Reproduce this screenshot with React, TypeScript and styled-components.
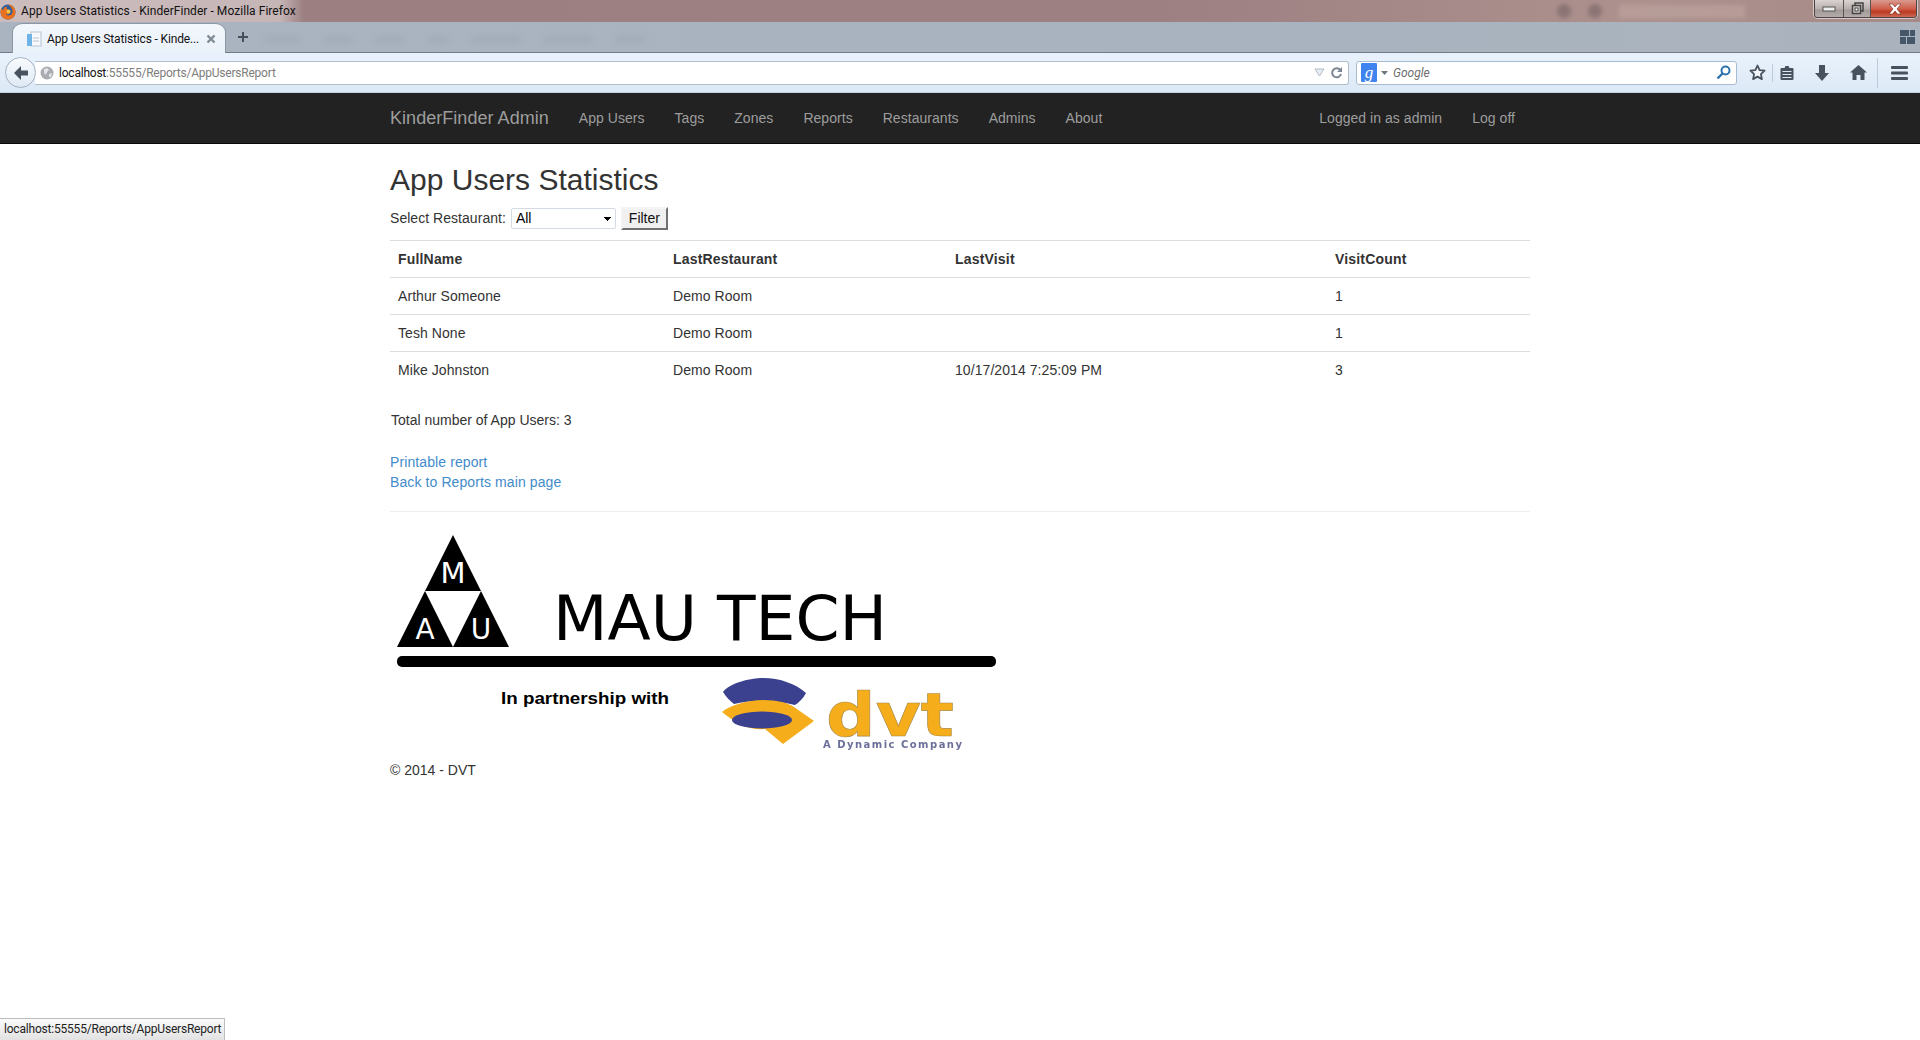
import React from "react";
import styled, { createGlobalStyle } from "styled-components";

const Global = createGlobalStyle`
  html, body { margin: 0; padding: 0; background: #fff; }
  body { font-family: "Liberation Sans", Arial, sans-serif; font-size: 14px; line-height: 20px; color: #333; overflow: hidden; }
`;

const Page = styled.div`
  position: relative;
  width: 1920px;
  height: 1040px;
  overflow: hidden;
  display: flex;
  flex-direction: column;
`;

/* ---------- Browser chrome ---------- */
const TitleBar = styled.div`
  position: relative;
  height: 22px;
  flex: none;
  display: flex;
  align-items: flex-start;
  background: linear-gradient(90deg, #9b7f81 0%, #9c8082 60%, #ac918e 85%, #a58a88 100%);
`;
const TitleGroup = styled.div`
  display: flex;
  align-items: center;
  gap: 4px;
  height: 22px;
  padding-right: 8px;
  background: linear-gradient(90deg, rgba(225, 215, 215, 0.7), rgba(225, 215, 215, 0.62) 92%, rgba(225, 215, 215, 0));
`;
const WindowTitle = styled.span`
  font-family: Roboto, "Noto Sans", sans-serif;
  font-size: 12px;
  line-height: 20px;
  letter-spacing: 0.05px;
  color: #111;
`;
const BlurredTools = styled.div`
  margin-left: auto;
  display: flex;
  align-items: center;
  gap: 17px;
  height: 22px;
  padding-right: 69px;
  filter: blur(2px);
  opacity: 0.5;
`;
const BlurDot = styled.div`
  width: 14px;
  height: 14px;
  border-radius: 50%;
  background: #6d5a5c;
`;
const BlurField = styled.div`
  width: 126px;
  height: 13px;
  background: #c4aaa3;
`;
const WindowControls = styled.div`
  display: flex;
  width: 103px;
  height: 18px;
  margin-right: 3px;
  border: 1px solid #4c4444;
  border-top: none;
  border-radius: 0 0 4px 4px;
  box-shadow: 0 0 0 1px rgba(255, 255, 255, 0.55);
  overflow: hidden;
  box-sizing: border-box;
`;
const ControlButton = styled.div<{ $w: number; $close?: boolean }>`
  width: ${(p) => p.$w}px;
  flex: none;
  display: flex;
  align-items: center;
  justify-content: center;
  border-right: ${(p) => (p.$close ? "none" : "1px solid #5a5252")};
  background: ${(p) =>
    p.$close
      ? "linear-gradient(180deg, #d99a8e 0%, #d0604c 50%, #bb3a22 70%, #cf6a55 100%)"
      : "linear-gradient(180deg, #d9d3d2 0%, #b9b0af 50%, #a39a99 60%, #b4acab 100%)"};
`;

const TabStrip = styled.div`
  position: relative;
  height: 31px;
  flex: none;
  box-sizing: border-box;
  display: flex;
  align-items: flex-end;
  padding-left: 12px;
  background: linear-gradient(90deg, #aab4c1, #a9b3bf 70%, #aab3bd);
  border-bottom: 1px solid #6f7a86;
`;
const Tab = styled.div`
  position: relative;
  z-index: 1;
  width: 214px;
  height: 30px;
  margin-bottom: -1px;
  box-sizing: border-box;
  display: flex;
  align-items: center;
  padding: 0 9px 0 13px;
  gap: 5px;
  border-radius: 11px 11px 0 0 / 9px 9px 0 0;
  background: linear-gradient(180deg, #f3f7fc 0%, #e9f1fa 100%);
  border: 1px solid #8c97a3;
  border-bottom: none;
`;
const TabTitle = styled.span`
  flex: 1;
  font-family: Roboto, "Noto Sans", sans-serif;
  font-size: 12px;
  letter-spacing: -0.15px;
  color: #111;
  white-space: nowrap;
`;
const NewTab = styled.div`
  margin: 0 0 4px 6px;
  width: 22px;
  height: 22px;
  display: flex;
  align-items: center;
  justify-content: center;
`;
const MenuSmudges = styled.div`
  display: flex;
  gap: 22px;
  margin: 0 0 9px 11px;
  filter: blur(3px);
  opacity: 0.16;
`;
const Smudge = styled.div<{ $w: number }>`
  width: ${(p) => p.$w}px;
  height: 7px;
  background: #7d8894;
`;
const TabGroups = styled.div`
  margin: 0 5px 8px auto;
  display: flex;
`;

const Toolbar = styled.div`
  height: 40px;
  flex: none;
  box-sizing: border-box;
  display: flex;
  align-items: center;
  padding-left: 5px;
  background: linear-gradient(180deg, #e9f2fc 0%, #dce9f6 100%);
  border-bottom: 1px solid #c3d3e3;
`;
const BackButton = styled.div`
  position: relative;
  z-index: 1;
  width: 31px;
  height: 31px;
  flex: none;
  box-sizing: border-box;
  display: flex;
  align-items: center;
  justify-content: center;
  border-radius: 50%;
  border: 1px solid #a2b1c1;
  background: linear-gradient(180deg, #f8fbfe, #dfe9f4);
`;
const UrlBar = styled.div`
  width: 1314px;
  margin-left: -1px;
  height: 24px;
  box-sizing: border-box;
  flex: none;
  display: flex;
  align-items: center;
  padding: 0 5px 0 5px;
  gap: 5px;
  background: #fff;
  border: 1px solid #b1bfcd;
  border-left: none;
  border-radius: 0 3px 3px 0;
`;
const UrlText = styled.span`
  flex: 1;
  font-family: Roboto, "Noto Sans", sans-serif;
  font-size: 12px;
  letter-spacing: -0.22px;
  color: #7d7d7d;
  white-space: nowrap;
`;
const UrlHost = styled.span`
  color: #111;
`;
const SearchBox = styled.div`
  width: 381px;
  height: 24px;
  margin-left: 7px;
  flex: none;
  box-sizing: border-box;
  display: flex;
  align-items: center;
  padding: 0 5px 0 4px;
  gap: 4px;
  background: #fff;
  border: 1px solid #a9bccf;
  border-radius: 3px;
`;
const GoogleBadge = styled.span`
  width: 16px;
  height: 19px;
  display: flex;
  align-items: center;
  justify-content: center;
  background: #3f84ee;
  color: #fff;
  font-family: "Liberation Serif", serif;
  font-style: italic;
  font-size: 17px;
  border-radius: 1px;
`;
const SearchHint = styled.span`
  flex: 1;
  margin-left: 1px;
  font-family: Roboto, "Noto Sans", sans-serif;
  font-size: 12px;
  font-style: italic;
  color: #6f6f6f;
`;
const ToolIcons = styled.div`
  display: flex;
  align-items: center;
  height: 40px;
  flex: none;
  margin-left: 5px;
`;
const ToolIcon = styled.div<{ $w: number }>`
  width: ${(p) => p.$w}px;
  height: 24px;
  display: flex;
  align-items: center;
  justify-content: center;
  flex: none;
`;
const ToolSep = styled.div<{ $h: number }>`
  width: 1px;
  height: ${(p) => p.$h}px;
  background: #bccadb;
  flex: none;
`;

/* ---------- Site navbar ---------- */
const NavBar = styled.nav`
  height: 51px;
  flex: none;
  box-sizing: border-box;
  background: #222;
  border-bottom: 1px solid #080808;
`;
const Container = styled.div`
  width: 1140px;
  margin: 0 auto;
`;
const NavInner = styled(Container)`
  display: flex;
  align-items: center;
  height: 50px;
`;
const Brand = styled.a`
  font-size: 18px;
  color: #9d9d9d;
  line-height: 20px;
  letter-spacing: 0.04px;
  margin-right: 15px;
`;
const NavLink = styled.a`
  padding: 0 15px;
  color: #9d9d9d;
  line-height: 20px;
  letter-spacing: 0.04px;
`;
const NavRight = styled.div`
  margin-left: auto;
  display: flex;
`;

/* ---------- Content ---------- */
const Heading = styled.h2`
  margin: 19px 0 10px;
  font-size: 30px;
  font-weight: 500;
  line-height: 33px;
  color: #333;
`;
const FilterRow = styled.form`
  display: flex;
  align-items: center;
  height: 24px;
  margin: 0 0 10px;
  letter-spacing: 0.04px;
`;
const FilterSelect = styled.select`
  width: 105px;
  height: 21px;
  margin: 0 5px 0 5px;
  box-sizing: border-box;
  padding: 0 0 0 4px;
  appearance: none;
  font-family: "Liberation Sans", Arial, sans-serif;
  font-size: 14px;
  color: #000;
  background-color: #fff;
  background-image: linear-gradient(45deg, transparent 50%, #000 50%), linear-gradient(135deg, #000 50%, transparent 50%);
  background-size: 4px 4px, 4px 4px;
  background-position: 92px 8px, 96px 8px;
  background-repeat: no-repeat;
  border: 1px solid #d5dbe3;
  border-radius: 2px;
`;
const FilterButton = styled.button`
  width: 47px;
  height: 23px;
  padding: 0;
  font-family: "Liberation Sans", Arial, sans-serif;
  font-size: 14px;
  color: #111;
  background: #f0f0f0;
  border: 2px solid;
  border-color: #f4f4f4 #707070 #707070 #f4f4f4;
`;
const Table = styled.table`
  width: 1140px;
  table-layout: fixed;
  border-collapse: collapse;
  margin-bottom: 20px;
`;
const Th = styled.th<{ $w: number }>`
  width: ${(p) => p.$w}px;
  box-sizing: border-box;
  padding: 8px;
  text-align: left;
  font-size: 14px;
  line-height: 20px;
  font-weight: 700;
  letter-spacing: 0.18px;
  border-top: 1px solid #ddd;
  border-bottom: 1px solid #ddd;
`;
const Td = styled.td`
  padding: 8px;
  line-height: 20px;
  letter-spacing: 0.07px;
  border-top: 1px solid #ddd;
`;
const Total = styled.p`
  margin: 22px 0 0 1px;
`;
const Links = styled.div`
  margin-top: 22px;
`;
const LinkLine = styled.a`
  display: block;
  color: #428bca;
  line-height: 20px;
  letter-spacing: 0.1px;
`;
const Rule = styled.hr`
  margin: 19px 0 0;
  border: none;
  border-top: 1px solid #eee;
`;
const LogoDrawing = styled.svg`
  display: block;
  margin-top: 17px;
`;
const Footer = styled.footer`
  margin-top: 5px;
`;
const StatusBar = styled.div`
  position: absolute;
  left: 0;
  bottom: 0;
  width: 225px;
  height: 22px;
  box-sizing: border-box;
  padding-left: 4px;
  font-family: Roboto, "Noto Sans", sans-serif;
  font-size: 12px;
  line-height: 20px;
  letter-spacing: -0.2px;
  color: #222;
  background: linear-gradient(180deg, #fbfbfb, #e2e2e2);
  border: 1px solid #bdbdbd;
  border-left: none;
  border-bottom: none;
`;

const rows = [
  ["Arthur Someone", "Demo Room", "", "1"],
  ["Tesh None", "Demo Room", "", "1"],
  ["Mike Johnston", "Demo Room", "10/17/2014 7:25:09 PM", "3"],
];

const Firefox = () => (
  <svg width="17" height="17" viewBox="0 0 17 17">
    <circle cx="8" cy="9" r="7.5" fill="#2d5d9c" />
    <path d="M8 1.500c4 0 7.500 3 7.500 7.500S12 16.500 8 16.500 .5 13 .5 9c0-1.500.5-3 1.300-4 0 1.500.7 2 1.400 2C3.500 5 5 3.500 7 3.500 6 5 6.500 6 8 6.500c2 .5 2.500 2 2 3.500-.6 1.500-3 2-4.500.8 1 2.500 6.500 2.500 7-1.800.3-3-2-6-4.500-7.500z" fill="#e8701f" />
    <circle cx="8.500" cy="8.500" r="2" fill="#f6c544" />
  </svg>
);

const MauLogo = () => (
  <LogoDrawing width="620" height="226" viewBox="0 0 620 226">
    <defs>
      <filter id="soft" x="-5%" y="-5%" width="110%" height="110%">
        <feGaussianBlur stdDeviation="0.45" />
      </filter>
    </defs>
    <g transform="translate(-390,-530)">
      <polygon points="453,536 481,592 425,592" fill="#000" />
      <polygon points="425,592 453,648 397,648" fill="#000" />
      <polygon points="481,592 509,648 453,648" fill="#000" />
      <text x="453" y="584" textAnchor="middle" fontFamily="DejaVu Sans" fontSize="29" fill="#fff">M</text>
      <text x="425" y="640" textAnchor="middle" fontFamily="DejaVu Sans" fontSize="28" fill="#fff">A</text>
      <text x="481" y="640" textAnchor="middle" fontFamily="DejaVu Sans" fontSize="28" fill="#fff">U</text>
      <text x="553" y="641" fontFamily="DejaVu Sans" fontSize="63" fill="#000" textLength="334" lengthAdjust="spacingAndGlyphs">MAU TECH</text>
      <rect x="397" y="657" width="599" height="11" rx="5" fill="#000" />
      <text x="501" y="705" fontFamily="Liberation Sans" fontWeight="700" fontSize="17" fill="#000" textLength="168" lengthAdjust="spacingAndGlyphs">In partnership with</text>
      <g filter="url(#soft)">
        <path d="M723 693C730 684 750 679 763 679C780 679 796 685 806 694C803 700 798 704 795 706C775 701 750 701 734 705C730 702 726 698 723 693Z" fill="#3b418f" />
        <path d="M722 713C730 706 748 701 763 701C778 701 788 704 794 708L814 722L783 745L765 730C750 732 735 724 722 713Z" fill="#f5ad1c" />
        <ellipse cx="762" cy="721" rx="30" ry="8.500" fill="#3b418f" />
        <text x="826" y="737" fontFamily="DejaVu Sans" fontWeight="700" fontSize="60" fill="#f5ad1c" stroke="#a58a4a" strokeWidth="0.6" textLength="128" lengthAdjust="spacingAndGlyphs">dvt</text>
        <text x="823" y="749" fontFamily="DejaVu Sans" fontWeight="700" fontSize="10" fill="#6c7099" textLength="139" lengthAdjust="spacing">A Dynamic Company</text>
      </g>
    </g>
  </LogoDrawing>
);

export default function App() {
  return (
    <Page>
      <Global />
      <TitleBar>
        <TitleGroup>
          <Firefox />
          <WindowTitle>App Users Statistics - KinderFinder - Mozilla Firefox</WindowTitle>
        </TitleGroup>
        <BlurredTools>
          <BlurDot />
          <BlurDot />
          <BlurField />
        </BlurredTools>
        <WindowControls>
          <ControlButton $w={28}>
            <svg width="14" height="6" viewBox="0 0 14 6"><rect x="1" y="1" width="12" height="4" fill="#eee" stroke="#555" strokeWidth="1" /></svg>
          </ControlButton>
          <ControlButton $w={26}>
            <svg width="13" height="13" viewBox="0 0 13 13" fill="none" stroke="#444" strokeWidth="1.500"><rect x="4" y="1" width="8" height="8" /><rect x="1.500" y="3.500" width="8" height="8" fill="#d2cbca" /><rect x="4" y="6" width="3" height="3" fill="#fff" strokeWidth="1" /></svg>
          </ControlButton>
          <ControlButton $w={47} $close>
            <svg width="14" height="12" viewBox="0 0 14 12"><path d="M1 1h3.500L7 4l2.500-3H13L9 6l4 5H9.500L7 8l-2.500 3H1l4-5z" fill="#fff" stroke="#7a2a1e" strokeWidth="0.6" /></svg>
          </ControlButton>
        </WindowControls>
      </TitleBar>

      <TabStrip>
        <Tab>
          <svg width="16" height="16" viewBox="0 0 16 16"><rect x="5" y="1" width="10" height="14" fill="#f6f8fb" stroke="#b9c4d0" /><rect x="1" y="3" width="5" height="12" fill="#6fb2e6" /><path d="M7 7h6M7 10h6" stroke="#b9c4d0" /></svg>
          <TabTitle>App Users Statistics - Kinde...</TabTitle>
          <svg width="10" height="10" viewBox="0 0 10 10"><path d="M1.500 1.500l7 7M8.500 1.500l-7 7" stroke="#7f8a95" strokeWidth="2.400" /></svg>
        </Tab>
        <NewTab>
          <svg width="12" height="12" viewBox="0 0 12 12"><path d="M6 1v10M1 6h10" stroke="#46505b" strokeWidth="2" /></svg>
        </NewTab>
        <MenuSmudges>
          {[36, 30, 30, 22, 50, 50, 30].map((w, i) => <Smudge key={i} $w={w} />)}
        </MenuSmudges>
        <TabGroups>
          <svg width="15" height="14" viewBox="0 0 15 14" fill="#47576a"><rect x="0" y="0" width="9" height="6" /><rect x="10" y="0" width="5" height="6" /><rect x="0" y="7" width="6" height="7" /><rect x="7" y="7" width="8" height="7" /></svg>
        </TabGroups>
      </TabStrip>

      <Toolbar>
        <BackButton>
          <svg width="16" height="14" viewBox="0 0 16 14"><path d="M8 0L1 7l7 7V9.500h7v-5H8z" fill="#47525e" /></svg>
        </BackButton>
        <UrlBar>
          <svg width="14" height="14" viewBox="0 0 14 14"><circle cx="7" cy="7" r="6.500" fill="#a9adb2" /><path d="M4 3l3-1 2 2-2 2-1 3-2-2zM9 8l3-1-1 4-2 0z" fill="#e2e4e7" /></svg>
          <UrlText><UrlHost>localhost</UrlHost>:55555/Reports/AppUsersReport</UrlText>
          <svg width="11" height="9" viewBox="0 0 11 9"><path d="M1 1h9L5.500 8z" fill="#e8edf2" stroke="#b1bac4" /></svg>
          <svg width="13" height="13" viewBox="0 0 13 13" fill="none"><path d="M10.500 4.500A4.500 4.500 0 1 0 11 8" stroke="#7c8793" strokeWidth="2" /><path d="M12 1v5H7z" fill="#7c8793" /></svg>
        </UrlBar>
        <SearchBox>
          <GoogleBadge>g</GoogleBadge>
          <svg width="7" height="4" viewBox="0 0 7 4"><path d="M0 0h7L3.500 4z" fill="#6d7782" /></svg>
          <SearchHint>Google</SearchHint>
          <svg width="15" height="15" viewBox="0 0 15 15" fill="none"><circle cx="9.500" cy="5.500" r="4" stroke="#2d73ad" strokeWidth="2" /><path d="M6.500 8.500L1.500 13.500" stroke="#2d73ad" strokeWidth="2.400" /></svg>
        </SearchBox>
        <ToolIcons>
          <ToolIcon $w={30}>
            <svg width="17" height="17" viewBox="0 0 17 17"><path d="M8.500 1.500l2.100 4.600 5 .6-3.700 3.400 1 5-4.400-2.500-4.400 2.500 1-5L1.400 6.700l5-.6z" fill="#f4f8fc" stroke="#47525e" strokeWidth="1.800" strokeLinejoin="round" /></svg>
          </ToolIcon>
          <ToolSep $h={18} />
          <ToolIcon $w={28}>
            <svg width="14" height="16" viewBox="0 0 14 16"><path d="M1.500 3h3l1-2h3l1 2h3a1 1 0 0 1 1 1v10a1 1 0 0 1-1 1h-11a1 1 0 0 1-1-1V4a1 1 0 0 1 1-1z" fill="#47525e" /><path d="M2.500 6.500h9M2.500 9.500h9M2.500 12.500h9" stroke="#dfe8f2" strokeWidth="1.100" /></svg>
          </ToolIcon>
          <ToolIcon $w={42}>
            <svg width="14" height="16" viewBox="0 0 14 16"><path d="M4 0h6v8h4l-7 8-7-8h4z" fill="#47525e" /></svg>
          </ToolIcon>
          <ToolIcon $w={30}>
            <svg width="17" height="15" viewBox="0 0 17 15"><path d="M8.500 0L17 7.500h-2.500V15h-4v-5h-4v5h-4V7.500H0z" fill="#47525e" /></svg>
          </ToolIcon>
          <ToolIcon $w={4} />
          <ToolSep $h={30} />
          <ToolIcon $w={42}>
            <svg width="17" height="14" viewBox="0 0 17 14" fill="#47525e"><rect y="0" width="17" height="3" rx="1" /><rect y="5.500" width="17" height="3" rx="1" /><rect y="11" width="17" height="3" rx="1" /></svg>
          </ToolIcon>
        </ToolIcons>
      </Toolbar>

      <NavBar>
        <NavInner>
          <Brand>KinderFinder Admin</Brand>
          {["App Users", "Tags", "Zones", "Reports", "Restaurants", "Admins", "About"].map((n) => (
            <NavLink key={n}>{n}</NavLink>
          ))}
          <NavRight>
            <NavLink>Logged in as admin</NavLink>
            <NavLink>Log off</NavLink>
          </NavRight>
        </NavInner>
      </NavBar>

      <Container>
        <Heading>App Users Statistics</Heading>
        <FilterRow>
          Select Restaurant:
          <FilterSelect defaultValue="All"><option>All</option></FilterSelect>
          <FilterButton type="button">Filter</FilterButton>
        </FilterRow>
        <Table>
          <thead>
            <tr>
              <Th $w={275}>FullName</Th>
              <Th $w={282}>LastRestaurant</Th>
              <Th $w={380}>LastVisit</Th>
              <Th $w={203}>VisitCount</Th>
            </tr>
          </thead>
          <tbody>
            {rows.map((r) => (
              <tr key={r[0]}>
                {r.map((c, i) => <Td key={i}>{c}</Td>)}
              </tr>
            ))}
          </tbody>
        </Table>
        <Total>Total number of App Users: 3</Total>
        <Links>
          <LinkLine>Printable report</LinkLine>
          <LinkLine>Back to Reports main page</LinkLine>
        </Links>
        <Rule />
        <MauLogo />
        <Footer>© 2014 - DVT</Footer>
      </Container>

      <StatusBar>localhost:55555/Reports/AppUsersReport</StatusBar>
    </Page>
  );
}
